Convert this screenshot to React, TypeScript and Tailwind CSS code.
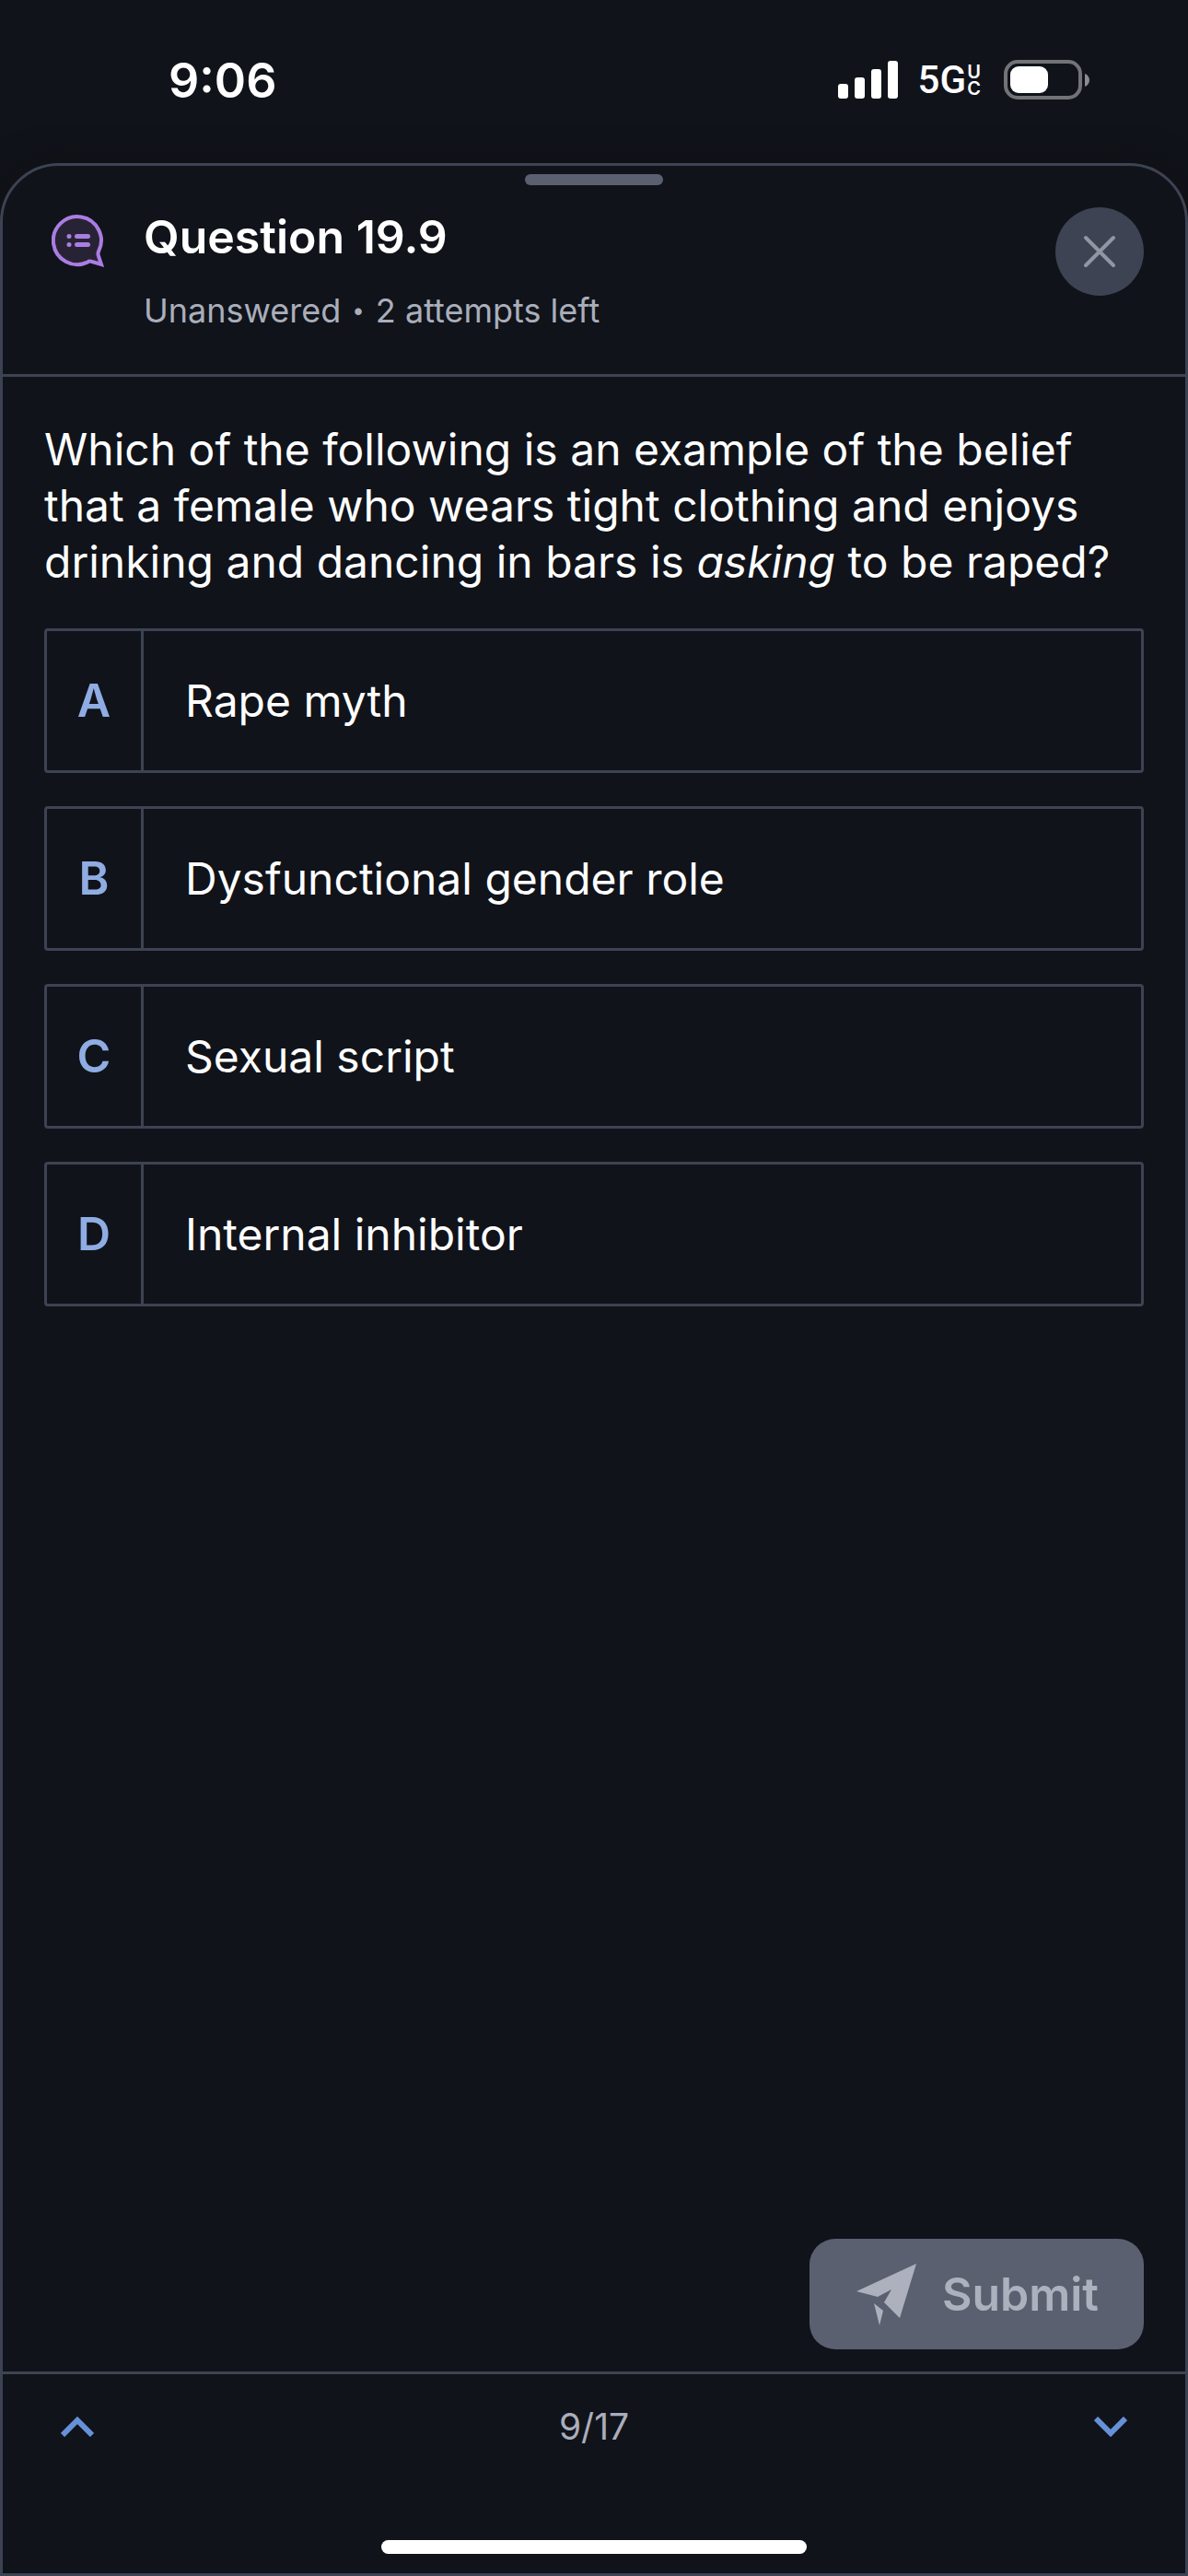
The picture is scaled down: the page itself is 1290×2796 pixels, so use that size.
import { useState } from 'react';

interface Option {
  letter: string;
  text: string;
}

const options: Option[] = [
  { letter: 'A', text: 'Rape myth' },
  { letter: 'B', text: 'Dysfunctional gender role' },
  { letter: 'C', text: 'Sexual script' },
  { letter: 'D', text: 'Internal inhibitor' },
];

function StatusBar() {
  return (
    <div className="h-[177px] shrink-0 flex items-start justify-between pt-[56px] pl-[183px] pr-[106px] text-white">
      <span className="text-[52px] leading-[64px] font-semibold">9:06</span>
      <div className="flex items-center h-[62px]">
        <svg className="w-[66px] h-[42px]" viewBox="0 0 66 42" fill="currentColor" aria-hidden="true">
          <rect x="0" y="25" width="11" height="16" rx="3" />
          <rect x="18" y="18" width="11" height="23" rx="3" />
          <rect x="36" y="9" width="11" height="32" rx="3" />
          <rect x="54" y="0" width="11" height="41" rx="3" />
        </svg>
        <span className="ml-[21px] text-[42px] leading-[48px] font-medium font-[Roboto,sans-serif]">5G</span>
        <span className="w-[17px] flex flex-col items-center text-[20px] leading-[18px] font-semibold">
          <span>U</span>
          <span>C</span>
        </span>
        <svg className="ml-[24px] w-[94px] h-[44px]" viewBox="0 0 94 44" aria-hidden="true">
          <rect x="2" y="2" width="81" height="39" rx="13" fill="none" stroke="#727377" strokeWidth="4" />
          <rect x="7" y="7" width="41" height="29" rx="9" fill="#fff" />
          <path d="M88 15c3 1 5 4 5 7s-2 6-5 7z" fill="#8b8c8f" />
        </svg>
      </div>
    </div>
  );
}

function QuestionIcon() {
  return (
    <svg className="w-[58px] h-[58px] shrink-0" viewBox="0 0 58 58" aria-hidden="true">
      <path
        d="M51 40A26 26 0 1 0 39 51.6Q41 50 44 51L54 54L51 45Q50 42 51 40z"
        fill="#282334"
        stroke="#aa7de3"
        strokeWidth="4"
      />
      <g fill="#aa7de3">
        <circle cx="19" cy="23.5" r="2.5" />
        <circle cx="19" cy="32.5" r="2.5" />
        <rect x="25" y="21" width="17" height="5" rx="2.5" />
        <rect x="25" y="30" width="17" height="5" rx="2.5" />
      </g>
    </svg>
  );
}

export default function App() {
  const [selected, setSelected] = useState<string | null>(null);

  return (
    <div className="min-h-screen flex flex-col bg-[#10131a] font-[Inter,sans-serif]">
      <StatusBar />

      <main className="flex-1 flex flex-col rounded-t-[64px] border-3 border-[#3d4352] bg-[#10131a] shadow-[0_0_36px_#101113]">
        {/* Drag handle */}
        <div className="w-[150px] h-3 mt-[9px] mx-auto rounded-full bg-[#5a6070]" />

        <header className="h-[208px] flex items-start border-b-3 border-[#3d4352] pt-6 pl-[53px] pr-[45px]">
          <div className="pt-2">
            <QuestionIcon />
          </div>
          <div className="flex-1 ml-[42px]">
            <h1 className="text-[50px] leading-[64px] font-semibold text-white">Question 19.9</h1>
            <p className="mt-6 flex items-center gap-3 text-[36px] leading-[48px] text-[#aaaebb]">
              <span>Unanswered</span>
              <span className="text-[24px]">•</span>
              <span>2 attempts left</span>
            </p>
          </div>
          <button
            type="button"
            aria-label="Close"
            className="w-24 h-24 rounded-full bg-[#3d4352] flex items-center justify-center"
          >
            <svg className="w-9 h-9" viewBox="0 0 36 36" stroke="#9196a5" strokeWidth="4" strokeLinecap="round">
              <path d="M3 3l30 30M33 3L3 33" />
            </svg>
          </button>
        </header>

        <section className="px-[45px] pt-12">
          <p id="question" className="text-[48px] leading-[61px] text-white">
            Which of the following is an example of the belief that a female who wears tight clothing and enjoys
            drinking and dancing in bars is <em>asking</em> to be raped?
          </p>
          <div role="radiogroup" aria-labelledby="question" className="flex flex-col gap-9 mt-[42px]">
            {options.map((option) => (
              <label
                key={option.letter}
                className="relative flex h-[157px] border-3 border-[#3d4352] rounded-sm cursor-pointer has-checked:border-[#8fade3]"
              >
                <input
                  type="radio"
                  name="answer"
                  value={option.letter}
                  checked={selected === option.letter}
                  onChange={() => setSelected(option.letter)}
                  className="sr-only"
                />
                <span className="w-[105px] flex items-center justify-center border-r-3 border-[#3d4352] text-[50px] font-semibold text-[#8fade3]">
                  {option.letter}
                </span>
                <span className="flex-1 flex items-center pl-[45px] text-[48px] text-white">{option.text}</span>
              </label>
            ))}
          </div>
        </section>

        <div className="mt-auto flex justify-end px-[45px] pb-6">
          <button
            type="button"
            disabled={selected === null}
            className="h-[120px] flex items-center gap-7 rounded-[28px] bg-[#5a6070] pl-[51px] pr-[49px] text-[50px] font-semibold text-[#adb1be]"
          >
            <svg className="w-[65px] h-[67px]" viewBox="0 0 65 67" fill="currentColor" aria-hidden="true">
              <path d="M65 0L0 30l23 6 15-8-8 14 17 17z" />
              <path d="M19 43l10 8-4 16z" />
            </svg>
            Submit
          </button>
        </div>

        <nav className="h-[219px] flex flex-col items-center justify-between border-t-3 border-[#3d4352] pt-[25px] pb-[21px]">
          <div className="w-full flex items-center justify-between px-[57px]">
            <button type="button" aria-label="Previous question" className="w-12 h-16 flex items-center justify-center">
              <svg className="w-9 h-[22px]" viewBox="0 0 36 22" fill="none" stroke="#6691d8" strokeWidth="6">
                <path d="M2 20L18 4l16 16" />
              </svg>
            </button>
            <span className="text-[39px] leading-[64px] text-[#aaaebb]">9/17</span>
            <button type="button" aria-label="Next question" className="w-12 h-16 flex items-center justify-center">
              <svg className="w-9 h-[22px]" viewBox="0 0 36 22" fill="none" stroke="#6691d8" strokeWidth="6">
                <path d="M2 2l16 16L34 2" />
              </svg>
            </button>
          </div>
          {/* Home indicator */}
          <div className="w-[462px] h-[15px] rounded-full bg-white" />
        </nav>
      </main>
    </div>
  );
}
